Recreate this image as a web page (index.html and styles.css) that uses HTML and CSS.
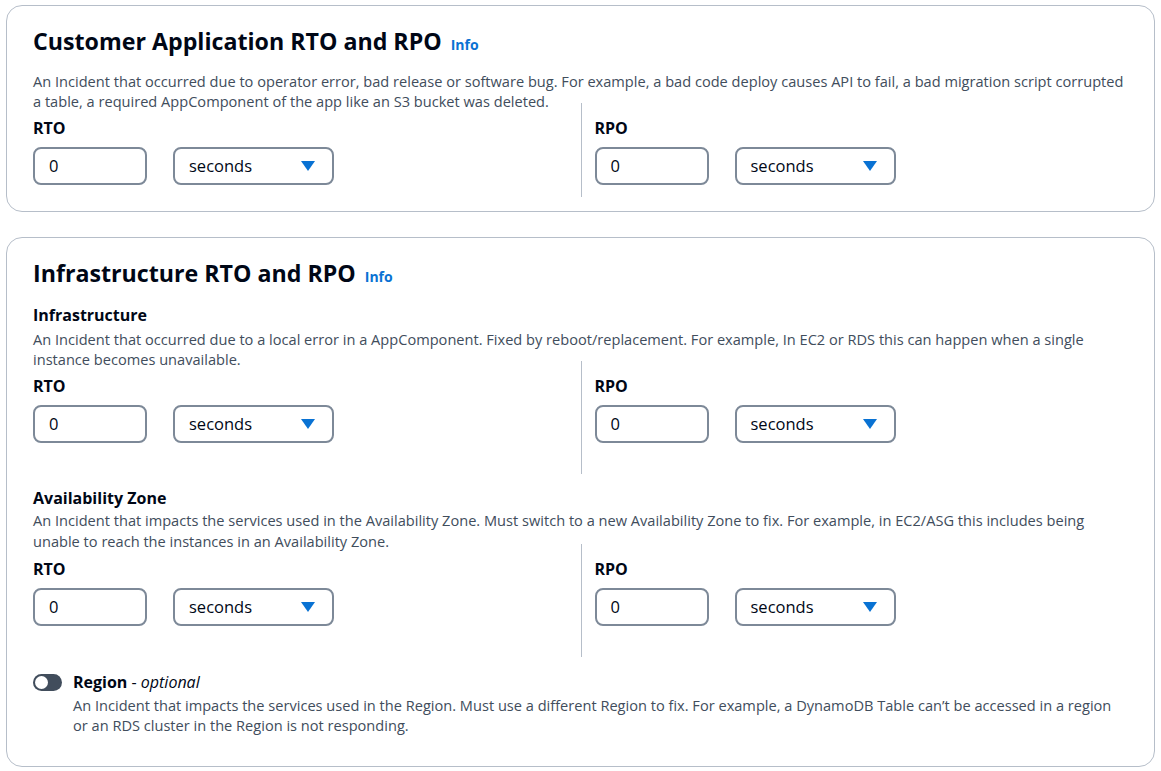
FILE: index.html
```html
<!DOCTYPE html>
<html lang="en">
<head>
<meta charset="utf-8">
<title>RTO and RPO</title>
<link rel="stylesheet" href="styles.css">
</head>
<body>
<div class="page">
  <section class="card card-first">
    <h2 class="card-title">Customer Application RTO and RPO <a class="info" href="#">Info</a></h2>
    <p class="desc desc-top">An Incident that occurred due to operator error, bad release or software bug. For example, a bad code deploy causes API to fail, a bad migration script corrupted a table, a required AppComponent of the app like an S3 bucket was deleted.</p>
    <div class="cols">
      <div class="col">
        <div class="label">RTO</div>
        <div class="controls">
          <div class="input">0</div>
          <div class="select"><span>seconds</span><svg class="caret" width="14" height="10" viewBox="0 0 14 10"><path d="M0 0h14L7 10z" fill="#0972d3"/></svg></div>
        </div>
      </div>
      <div class="col col-right">
        <div class="label">RPO</div>
        <div class="controls">
          <div class="input">0</div>
          <div class="select"><span>seconds</span><svg class="caret" width="14" height="10" viewBox="0 0 14 10"><path d="M0 0h14L7 10z" fill="#0972d3"/></svg></div>
        </div>
      </div>
    </div>
  </section>

  <section class="card card-second">
    <h2 class="card-title">Infrastructure RTO and RPO <a class="info" href="#">Info</a></h2>

    <div class="group group-infra">
      <div class="sub">Infrastructure</div>
      <p class="desc">An Incident that occurred due to a local error in a AppComponent. Fixed by reboot/replacement. For example, In EC2 or RDS this can happen when a single instance becomes unavailable.</p>
      <div class="cols">
        <div class="col col-tall">
          <div class="label">RTO</div>
          <div class="controls">
            <div class="input">0</div>
            <div class="select"><span>seconds</span><svg class="caret" width="14" height="10" viewBox="0 0 14 10"><path d="M0 0h14L7 10z" fill="#0972d3"/></svg></div>
          </div>
        </div>
        <div class="col col-right col-tall">
          <div class="label">RPO</div>
          <div class="controls">
            <div class="input">0</div>
            <div class="select"><span>seconds</span><svg class="caret" width="14" height="10" viewBox="0 0 14 10"><path d="M0 0h14L7 10z" fill="#0972d3"/></svg></div>
          </div>
        </div>
      </div>
    </div>

    <div class="group group-az">
      <div class="sub sub-az">Availability Zone</div>
      <p class="desc desc-az">An Incident that impacts the services used in the Availability Zone. Must switch to a new Availability Zone to fix. For example, in EC2/ASG this includes being unable to reach the instances in an Availability Zone.</p>
      <div class="cols">
        <div class="col col-tall">
          <div class="label">RTO</div>
          <div class="controls">
            <div class="input">0</div>
            <div class="select"><span>seconds</span><svg class="caret" width="14" height="10" viewBox="0 0 14 10"><path d="M0 0h14L7 10z" fill="#0972d3"/></svg></div>
          </div>
        </div>
        <div class="col col-right col-tall">
          <div class="label">RPO</div>
          <div class="controls">
            <div class="input">0</div>
            <div class="select"><span>seconds</span><svg class="caret" width="14" height="10" viewBox="0 0 14 10"><path d="M0 0h14L7 10z" fill="#0972d3"/></svg></div>
          </div>
        </div>
      </div>
    </div>

    <div class="toggle-row">
      <span class="toggle"><span class="knob"></span></span>
      <div class="toggle-text">
        <div class="toggle-label"><b>Region</b> - <i>optional</i></div>
        <p class="desc desc-toggle">An Incident that impacts the services used in the Region. Must use a different Region to fix. For example, a DynamoDB Table can’t be accessed in a region or an RDS cluster in the Region is not responding.</p>
      </div>
    </div>
  </section>
</div>
</body>
</html>
```

FILE: styles.css
```css
* { box-sizing: border-box; }
html, body { margin: 0; padding: 0; background: #ffffff; }
body {
  font-family: "Open Sans", "Noto Sans", sans-serif;
  color: #000716;
  font-size: 14px;
  line-height: 20px;
}
.page {
  padding: 5px 6px 0 6px;
  display: flex;
  flex-direction: column;
  gap: 25px;
}
.card {
  border: 1px solid #b6bec9;
  border-radius: 16px;
  padding: 20px 26px 14px 26px;
}
.card-second { padding-bottom: 31px; }
.card-title {
  margin: 0;
  font-size: 23.2px;
  line-height: 30px;
  font-weight: 700;
}
.info {
  color: #0972d3;
  font-size: 14px;
  font-weight: 700;
  text-decoration: none;
  margin-left: 3px;
}
.desc {
  margin: 0;
  color: #414d5c;
  font-size: 14.6px;
  line-height: 20px;
}
.desc-top { margin-top: 11px; }
.cols {
  display: grid;
  grid-template-columns: 1fr 1fr;
  margin-top: -8px;
}
.col {
  padding: 14px 0 12px 0;
}
.col-tall { padding-bottom: 31px; }
.col-right {
  border-left: 1px solid #b6bec9;
  padding-left: 13px;
}
.label {
  font-weight: 700;
  font-size: 16px;
  line-height: 22px;
}
.controls {
  display: flex;
  gap: 26px;
  margin-top: 8px;
}
.input, .select {
  height: 38px;
  border: 2px solid #7d8998;
  border-radius: 8px;
  font-size: 16.5px;
  display: flex;
  align-items: center;
}
.input {
  width: 114px;
  padding-left: 14px;
}
.select {
  width: 161px;
  padding: 0 17px 0 14px;
  justify-content: space-between;
}
.caret { display: block; }
.group-infra { margin-top: 12px; }
.group-az { margin-top: 13px; }
.sub {
  font-weight: 700;
  font-size: 16px;
  line-height: 22px;
  margin-bottom: 3px;
}
.sub-az { margin-bottom: 1px; }
.desc-az { line-height: 21px; }
.toggle-row {
  display: flex;
  gap: 11px;
  margin-top: 14px;
  align-items: flex-start;
}
.toggle {
  flex: none;
  width: 29px;
  height: 17px;
  border-radius: 9px;
  background: #414d5c;
  margin-top: 3px;
  position: relative;
}
.knob {
  position: absolute;
  left: 2px;
  top: 2px;
  width: 13px;
  height: 13px;
  border-radius: 50%;
  background: #ffffff;
}
.toggle-label {
  font-size: 16px;
  line-height: 22px;
}
.toggle-label i { color: #000716; font-weight: 400; }
.desc-toggle { margin-top: 2px; }
```
